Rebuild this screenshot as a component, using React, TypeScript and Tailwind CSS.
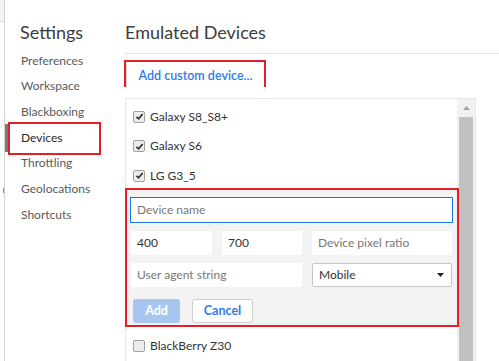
import * as React from "react";

const navItems = [
  "Preferences",
  "Workspace",
  "Blackboxing",
  "Devices",
  "Throttling",
  "Geolocations",
  "Shortcuts",
];

const devicesTop = [
  { name: "Galaxy S8_S8+", checked: true },
  { name: "Galaxy S6", checked: true },
  { name: "LG G3_5", checked: true },
];

function Checkbox({ checked }: { checked: boolean }) {
  return (
    <span className="flex h-[12px] w-[12px] shrink-0 items-center justify-center rounded-[2px] border border-[#a0a0a0] bg-[#ececec]">
      {checked && (
        <svg viewBox="0 0 10 10" className="h-[9px] w-[9px]">
          <path d="M1.6 5.3 L4 7.6 L8.5 2.2" fill="none" stroke="#333" strokeWidth="1.9" />
        </svg>
      )}
    </span>
  );
}

function DeviceRow({ name, checked }: { name: string; checked: boolean }) {
  return (
    <div className="flex h-[29.5px] items-center gap-[5px] pl-[7px] text-[12px] text-[#333]">
      <Checkbox checked={checked} />
      <span>{name}</span>
    </div>
  );
}

export default function App() {
  return (
    <div className="flex h-[361px] w-[499px] overflow-hidden bg-white font-['Lato',sans-serif] text-[#333]">
      {/* left edge */}
      <div className="relative w-[5px] shrink-0 border-r border-[#d4d4d4]">
        <div className="h-[22px] border-b border-[#dcdcdc] bg-[#f3f3f3]" />
        <div className="absolute left-[3px] top-[188px] h-[5px] w-px bg-[#8a8a8a]" />
      </div>

      {/* sidebar */}
      <aside className="w-[120px] shrink-0 pt-[20px]">
        <h1 className="pl-[15px] text-[18px] leading-[24px] text-[#3c3c3c]">Settings</h1>
        <nav className="mt-[4px] flex flex-col">
          {navItems.map((label) => {
            const active = label === "Devices";
            return (
              <div
                key={label}
                className={
                  active
                    ? "relative flex h-[25.67px] items-center pl-[16px] text-[12px] text-[#2a2a2a]"
                    : "flex h-[25.67px] items-center pl-[16px] text-[12px] text-[#5a5a5a]"
                }
              >
                {active && (
                  <>
                    <span className="absolute left-0 top-[-1px] h-[28px] w-[3px] bg-[#7a7a7a]" />
                    <span className="absolute left-[3px] top-[-3px] h-[33px] w-[93px] border-2 border-[#e3202a]" />
                  </>
                )}
                {label}
              </div>
            );
          })}
        </nav>
      </aside>

      {/* main */}
      <main className="flex min-w-0 flex-1 flex-col pt-[20px]">
        <h2 className="text-[18px] leading-[24px] text-[#3c3c3c]">Emulated Devices</h2>
        <div className="mt-[9px] h-px bg-[#e4e4e4]" />

        <div className="-ml-px mt-[6px] h-[27px] w-[142px] border-2 border-[#e3202a]">
          <button className="h-full w-full border-l border-[#d6d6d6] bg-white text-[12.5px] font-semibold text-[#2f7be6]">
            Add custom device...
          </button>
        </div>

        <div className="mt-[11px] flex w-[351px] flex-1 border border-b-0 border-[#e6e6e6]">
          <div className="flex min-w-0 flex-1 flex-col pt-[3px]">
            {devicesTop.map((d) => (
              <DeviceRow key={d.name} {...d} />
            ))}

            <div className="relative z-10 -ml-px -mt-[2.5px] w-[334px] border-2 border-[#e3202a] bg-[#f3f3f3] pb-[2px] pl-[3px] pt-[7px]">
              <div className="flex h-[26px] w-[323px] items-center border border-[#1a73e8] bg-white pl-[6px] text-[12px] text-[#777]">
                Device name
              </div>
              <div className="ml-px mt-[8px] flex gap-[10px] text-[12px]">
                <div className="flex h-[24px] w-[81px] items-center bg-white pl-[6px] text-[#333]">400</div>
                <div className="flex h-[24px] w-[80px] items-center bg-white pl-[6px] text-[#333]">700</div>
                <div className="flex h-[24px] w-[140px] items-center bg-white pl-[6px] text-[#777]">Device pixel ratio</div>
              </div>
              <div className="ml-px mt-[8px] flex gap-[10px] text-[12px]">
                <div className="flex h-[24px] w-[171px] items-center bg-white pl-[6px] text-[#777]">User agent string</div>
                <div className="flex h-[24px] w-[140px] items-center justify-between rounded-[2px] border border-[#c6c6c6] bg-white pl-[6px] pr-[7px] text-[#333]">
                  <span>Mobile</span>
                  <svg viewBox="0 0 7 4" className="h-[4px] w-[7px]">
                    <path d="M0 0 H7 L3.5 4 Z" fill="#222" />
                  </svg>
                </div>
              </div>
              <div className="ml-[3px] mt-[12px] flex gap-[12px] text-[12.5px] font-bold">
                <button className="h-[24px] w-[47px] rounded-[3px] bg-[#a8c7f0] text-white">Add</button>
                <button className="h-[24px] w-[61px] rounded-[3px] border border-[#cfcfcf] bg-white text-[#2f7be6]">
                  Cancel
                </button>
              </div>
            </div>

            <div className="mt-[4px]">
              <DeviceRow name="BlackBerry Z30" checked={false} />
            </div>
          </div>

          {/* scrollbar */}
          <div className="flex w-[18px] shrink-0 flex-col bg-[#f1f1f1]">
            <div className="flex h-[18px] items-center justify-center">
              <svg viewBox="0 0 7 4" className="h-[4px] w-[7px]">
                <path d="M0 4 L3.5 0 L7 4 Z" fill="#a3a3a3" />
              </svg>
            </div>
            <div className="mx-[2px] flex-1 bg-[#c1c1c1]" />
          </div>
        </div>
      </main>
    </div>
  );
}
